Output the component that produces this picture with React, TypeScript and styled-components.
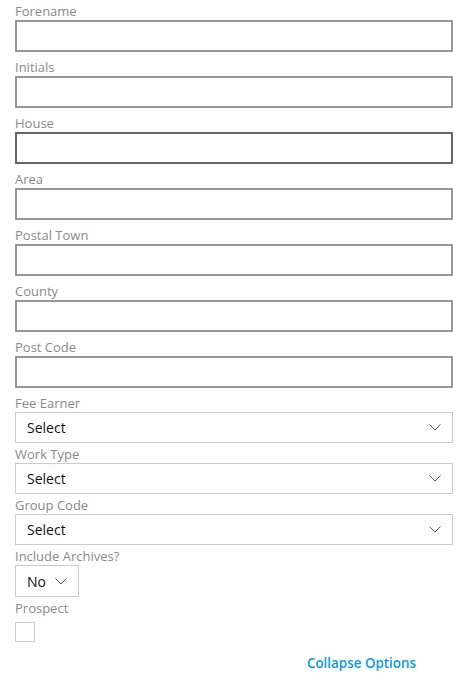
import React from "react";
import styled, { createGlobalStyle } from "styled-components";

const Global = createGlobalStyle`
  html, body { margin: 0; padding: 0; background: #fff; }
  body { font-family: "Segoe UI", "Open Sans", sans-serif; }
`;

const Form = styled.div`
  display: flex;
  flex-direction: column;
  padding: 0 11px 0 15px;
  width: 464px;
  box-sizing: border-box;
`;

const Field = styled.div<{ $gap?: number }>`
  display: flex;
  flex-direction: column;
  margin-bottom: ${(p) => p.$gap ?? 0}px;
`;

const Label = styled.label`
  height: 20px;
  box-sizing: border-box;
  padding-top: 1px;
  line-height: 20px;
  font-size: 13px;
  color: #8a8a8a;
  white-space: nowrap;
`;

const TextBox = styled.div<{ $focused?: boolean }>`
  height: 32px;
  box-sizing: border-box;
  border: 2px solid ${(p) => (p.$focused ? "#666666" : "#999999")};
  background: #fff;
`;

const SelectBox = styled.div<{ $width?: number; $height?: number }>`
  display: flex;
  align-items: center;
  justify-content: space-between;
  box-sizing: border-box;
  height: ${(p) => p.$height ?? 31}px;
  width: ${(p) => (p.$width ? `${p.$width}px` : "100%")};
  border: 1px solid #cccccc;
  padding: 0 11px 0 11px;
  font-size: 14px;
  color: #111;
`;

const Chevron = () => (
  <svg width="12" height="7" viewBox="0 0 12 7" fill="none">
    <path d="M0.5 0.5 L6 6 L11.5 0.5" stroke="#555" strokeWidth="1" />
  </svg>
);

const Checkbox = styled.div`
  width: 20px;
  height: 20px;
  box-sizing: border-box;
  border: 1px solid #cccccc;
  margin-top: 5px;
`;

const Footer = styled.div`
  display: flex;
  justify-content: flex-end;
  padding: 12px 37px 0 0;
`;

const LinkText = styled.a`
  font-size: 13.4px;
  font-weight: 600;
  color: #0c9ad9;
  text-decoration: none;
  cursor: pointer;
`;

const textFields = ["Forename", "Initials", "House", "Area", "Postal Town", "County", "Post Code"];
const selectFields = ["Fee Earner", "Work Type", "Group Code"];

export default function App() {
  return (
    <>
      <Global />
      <Form>
        {textFields.map((f) => (
          <Field key={f} $gap={4}>
            <Label>{f}</Label>
            <TextBox $focused={f === "House"} />
          </Field>
        ))}
        {selectFields.map((f) => (
          <Field key={f}>
            <Label>{f}</Label>
            <SelectBox>
              <span>Select</span>
              <Chevron />
            </SelectBox>
          </Field>
        ))}
        <Field>
          <Label>Include Archives?</Label>
          <SelectBox $width={64} $height={32}>
            <span>No</span>
            <Chevron />
          </SelectBox>
        </Field>
        <Field>
          <Label>Prospect</Label>
          <Checkbox />
        </Field>
        <Footer>
          <LinkText>Collapse Options</LinkText>
        </Footer>
      </Form>
    </>
  );
}
